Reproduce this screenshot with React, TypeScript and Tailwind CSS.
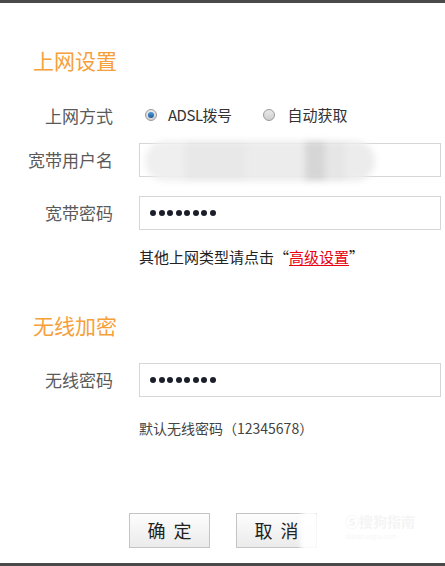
const font = "font-['Noto_Sans_CJK_SC','Noto_Sans',sans-serif]";

function Dots() {
  return (
    <div className="flex items-center gap-[2.5px]">
      {Array.from({ length: 8 }).map((_, i) => (
        <span key={i} className="h-[6px] w-[6px] rounded-full bg-[#1c1f2a]" />
      ))}
    </div>
  );
}

function Row({ label, children }: { label: string; children: React.ReactNode }) {
  return (
    <div className="flex items-center">
      <div className="w-[113px] text-right text-[17px] leading-none text-[#5a5a5a]">{label}</div>
      <div className="ml-[26px] flex-1">{children}</div>
    </div>
  );
}

function Field({ children }: { children?: React.ReactNode }) {
  return (
    <div className="relative flex h-[34px] w-[302px] items-center border border-[#d6d6d6] bg-white pl-[10px]">
      {children}
    </div>
  );
}

function Radio({ checked }: { checked?: boolean }) {
  return (
    <span className="flex h-[12px] w-[12px] items-center justify-center rounded-full border border-[#9a9a9a] bg-gradient-to-b from-[#e9e9e9] to-[#cfcfcf]">
      {checked && <span className="h-[6px] w-[6px] rounded-full bg-gradient-to-b from-[#4f9ad8] to-[#1a5c9e]" />}
    </span>
  );
}

export default function App() {
  return (
    <div className={`relative flex h-[566px] w-[445px] flex-col bg-white ${font}`}>
      <div className="h-[3px] bg-[#4a4a4a]" />

      <h2 className="ml-[33px] mt-[44px] text-[21px] leading-[26px] text-[#f6a03a]">上网设置</h2>

      <div className="mt-[31px] flex flex-col">
        <Row label="上网方式">
          <div className="flex items-center text-[15px] text-[#333]">
            <span className="ml-[6px]"><Radio checked /></span>
            <span className="ml-[11px] tracking-[-0.5px]">ADSL拨号</span>
            <span className="ml-[31px]"><Radio /></span>
            <span className="ml-[13px]">自动获取</span>
          </div>
        </Row>

        <div className="mt-[16px]">
          <Row label="宽带用户名">
            <Field>
              <div className="absolute left-[5px] top-[-3px] flex h-[40px] blur-[3px]">
                <span className="w-[40px] rounded-l-full bg-[#efefef]" />
                <span className="w-[60px] bg-[#e8e8e8]" />
                <span className="w-[60px] bg-[#ececec]" />
                <span className="w-[20px] bg-[#d6d6d6]" />
                <span className="w-[20px] bg-[#e6e6e6]" />
                <span className="w-[30px] rounded-r-full bg-[#ececec]" />
              </div>
            </Field>
          </Row>
        </div>

        <div className="mt-[19px]">
          <Row label="宽带密码">
            <Field>
              <Dots />
            </Field>
          </Row>
        </div>

        <p className="ml-[139px] mt-[18px] text-[15px] leading-[18px] text-[#222]">
          其他上网类型请点击“<span className="text-[#e8000f] underline underline-offset-2">高级设置</span>”
        </p>
      </div>

      <h2 className="ml-[33px] mt-[46px] text-[21px] leading-[26px] text-[#f6a03a]">无线加密</h2>

      <div className="mt-[25px]">
        <Row label="无线密码">
          <Field>
            <Dots />
          </Field>
        </Row>
      </div>

      <p className="ml-[139px] mt-[22px] text-[14px] leading-[18px] text-[#444]">默认无线密码（12345678）</p>

      <div className="ml-[129px] mt-[76px] flex gap-[26px]">
        <button className="h-[35px] w-[81px] border border-[#c4c4c4] bg-gradient-to-b from-[#fdfdfd] to-[#ebebeb] pl-[8px] text-[18px] tracking-[8px] text-[#222]">
          确定
        </button>
        <button className="h-[35px] w-[81px] border border-[#c4c4c4] bg-gradient-to-b from-[#fdfdfd] to-[#ebebeb] pl-[8px] text-[18px] tracking-[8px] text-[#222]">
          取消
        </button>
      </div>

      <div className="absolute left-[300px] top-[509px] h-[46px] w-[20px] rounded-full bg-white/90 blur-[2px]" />
      <div className="absolute left-[345px] top-[511px] text-[14px] font-bold text-[#f5f5f5]">Ⓢ搜狗指南</div>
      <div className="absolute left-[345px] top-[532px] text-[6px] text-[#f6f6f6]">zhinan.sogou.com</div>

      <div className="mt-auto h-[3px] bg-[#4a4a4a]" />
    </div>
  );
}
